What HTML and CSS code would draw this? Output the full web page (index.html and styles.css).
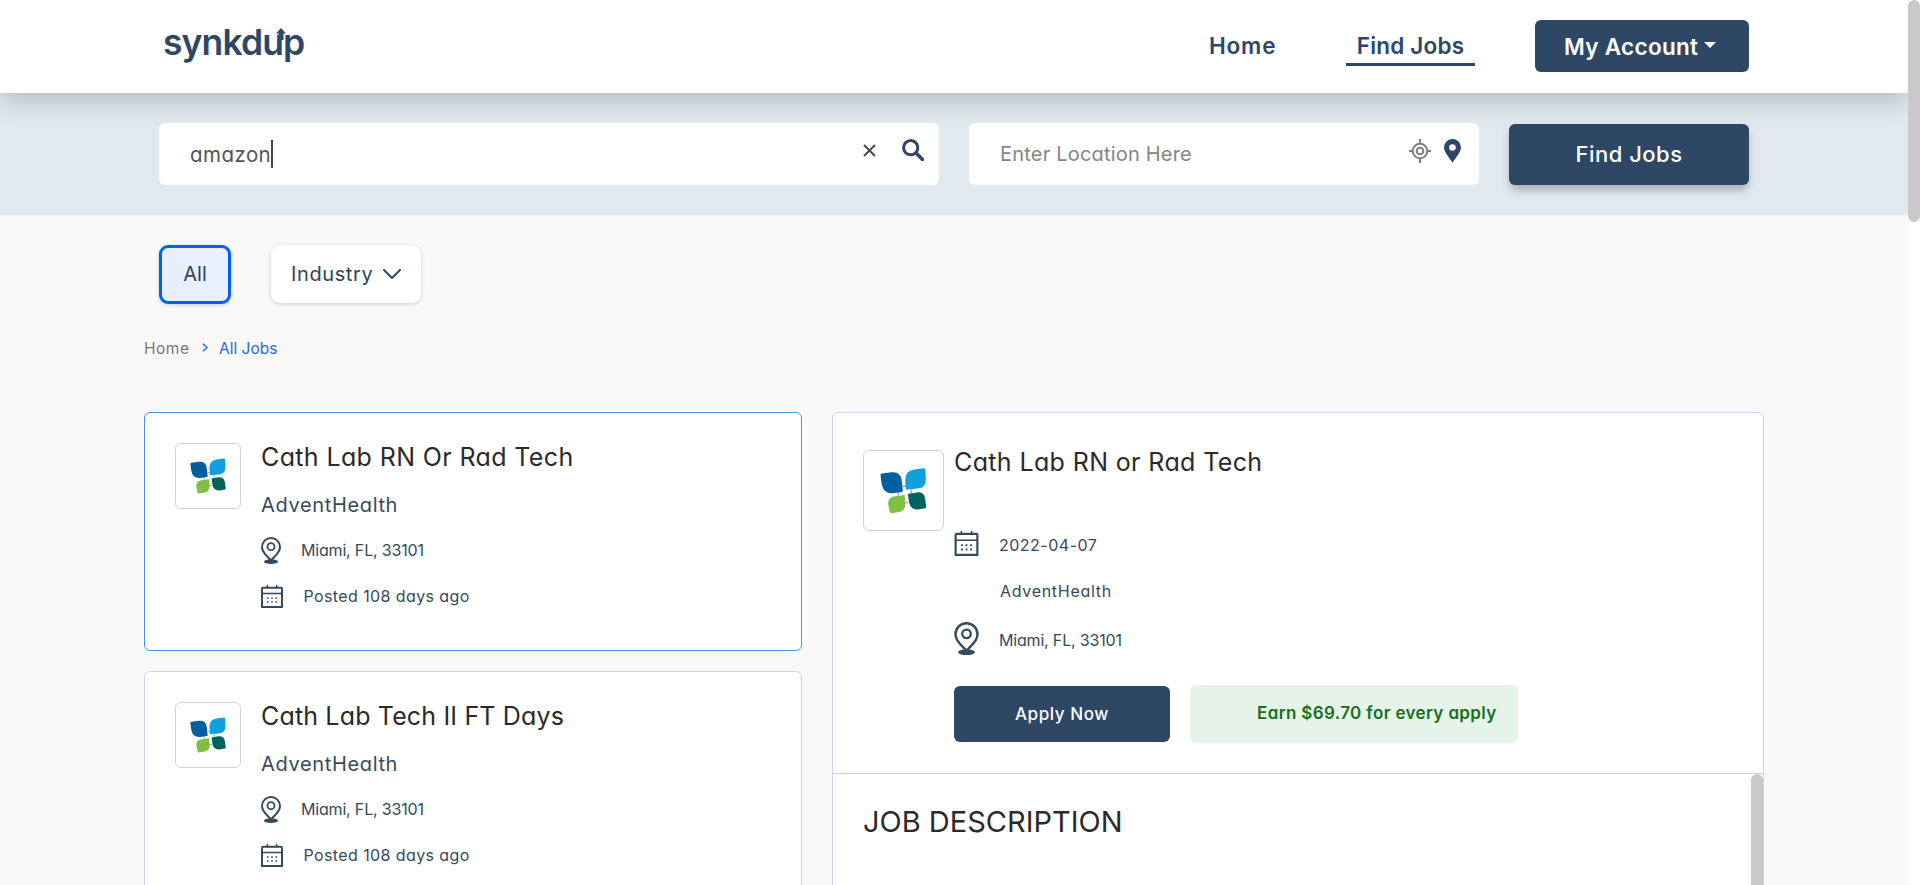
FILE: index.html
```
<!DOCTYPE html>
<html lang="en">
<head>
<meta charset="utf-8">
<title>Synkdup - Find Jobs</title>
<link rel="stylesheet" href="styles.css">
</head>
<body>
<svg class="defs" width="0" height="0">
  <defs>
    <g id="leaves">
      <path d="M192 232V240M223 225V236M203 217H212M207 257H216" stroke="#8b9297" stroke-width="2.5"/>
      <path d="M153 187L176 184Q197 182 200 202L203 228Q203 231 200 231L180 234Q156 236 152 210L149.500 191Q149.500 187 153 187Z" fill="#005f9e"/>
      <path d="M210 226L208.500 204Q208 180 230 177L253 174Q257 174 257 178L258 200Q259 221 238 223Z" fill="#119fdd"/>
      <path d="M207 238L209 258Q210 276 194 279L176 282Q172 282 171.500 278L168 261Q166 243 184 241Z" fill="#80bf41"/>
      <path d="M215 236L236 232Q253 230 256 246L259 267Q259 270 256 270L240 273Q222 274 218 257Z" fill="#00625e"/>
    </g>
    <symbol id="pin" viewBox="0 0 60 81">
      <ellipse cx="30" cy="74" rx="21" ry="7" fill="#354a5a"/>
      <path d="M30 71C24 61 3 50 3 30A27 27 0 0 1 57 30C57 50 36 61 30 71Z" fill="#fff" stroke="#354a5a" stroke-width="6"/>
      <circle cx="30" cy="29" r="10.500" fill="none" stroke="#354a5a" stroke-width="5.500"/>
    </symbol>
    <symbol id="calendar" viewBox="0 0 66 69">
      <path d="M3 66V11Q3 8 6 8H60Q63 8 63 11V66Z" fill="none" stroke="#354a5a" stroke-width="6"/>
      <path d="M3 25.500H63M19 0V10M47 0V10" fill="none" stroke="#354a5a" stroke-width="4.500"/>
      <path d="M18 39H48M18 51H48" fill="none" stroke="#354a5a" stroke-width="5" stroke-dasharray="5 7.500"/>
    </symbol>
  </defs>
</svg>

<div class="page">
  <div class="content">
    <header class="header">
      <div class="brand">synkdup
        <svg class="brand-arrow" viewBox="0 0 10 12"><path d="M5 0L10 5.500H7.500V12H2.500V5.500H0Z" fill="#2e4765"/></svg>
      </div>
      <nav class="nav">
        <a class="nav-link nav-home">Home</a>
        <a class="nav-link nav-jobs">Find Jobs</a>
        <a class="account"><span>My Account</span><i class="caret"></i></a>
      </nav>
    </header>

    <section class="search">
      <div class="field field-query">
        <span class="query">amazon</span><i class="cursor"></i>
        <svg class="clear" viewBox="0 0 13 13"><path d="M1 1L12 12M12 1L1 12" stroke="#4a4a4a" stroke-width="2"/></svg>
        <svg class="magnify" viewBox="0 0 22 22"><circle cx="8.700" cy="8.700" r="7.100" fill="none" stroke="#2e4765" stroke-width="3"/><path d="M14 14L20.500 20.500" stroke="#2e4765" stroke-width="3.500" stroke-linecap="round"/></svg>
      </div>
      <div class="field field-location">
        <span class="placeholder">Enter Location Here</span>
        <svg class="target" viewBox="0 0 22 24"><g fill="none" stroke="#7d7d7d" stroke-width="2"><circle cx="11" cy="12" r="7.300"/><circle cx="11" cy="12" r="3.300"/><path d="M11 0V5M11 19V24M0 12H4M18 12H22"/></g></svg>
        <svg class="marker" viewBox="0 0 17 24"><path fill-rule="evenodd" d="M8.500 0A8.500 8.500 0 0 1 17 8.500C17 13.500 11 19 8.500 24C6 19 0 13.500 0 8.500A8.500 8.500 0 0 1 8.500 0ZM8.500 5.200A3.300 3.300 0 1 0 8.500 11.800A3.300 3.300 0 1 0 8.500 5.200Z" fill="#2e4765"/></svg>
      </div>
      <button class="find">Find Jobs</button>
    </section>

    <div class="filters">
      <span class="chip chip-all">All</span>
      <span class="chip chip-industry"><span>Industry</span><svg class="chevron" viewBox="0 0 18 11"><path d="M1 1L9 9L17 1" fill="none" stroke="#2e4765" stroke-width="2" stroke-linecap="round" stroke-linejoin="round"/></svg></span>
    </div>

    <div class="crumbs">
      <span class="crumb-home">Home</span>
      <svg class="crumb-sep" viewBox="0 0 6 9"><path d="M1 .7L5 4.500L1 8.300" fill="none" stroke="#2a68e0" stroke-width="1.400"/></svg>
      <span class="crumb-all">All Jobs</span>
    </div>

    <main class="columns">
      <div class="list">
        <article class="card card-active">
          <div class="logo"><svg viewBox="105 129 198 198"><use href="#leaves"/></svg></div>
          <div class="info">
            <h2 class="title title-rn">Cath Lab RN Or Rad Tech</h2>
            <p class="company">AdventHealth</p>
            <div class="meta meta-place"><svg class="pin"><use href="#pin"/></svg><span class="place">Miami, FL, 33101</span></div>
            <div class="meta meta-date"><svg class="cal"><use href="#calendar"/></svg><span class="posted">Posted 108 days ago</span></div>
          </div>
        </article>
        <article class="card">
          <div class="logo"><svg viewBox="105 129 198 198"><use href="#leaves"/></svg></div>
          <div class="info">
            <h2 class="title title-tech">Cath Lab Tech II FT Days</h2>
            <p class="company">AdventHealth</p>
            <div class="meta meta-place"><svg class="pin"><use href="#pin"/></svg><span class="place">Miami, FL, 33101</span></div>
            <div class="meta meta-date"><svg class="cal"><use href="#calendar"/></svg><span class="posted">Posted 108 days ago</span></div>
          </div>
        </article>
      </div>

      <section class="detail">
        <div class="summary">
          <div class="logo logo-large"><svg viewBox="110 133 189 189"><use href="#leaves"/></svg></div>
          <div class="facts">
            <h2 class="title title-detail">Cath Lab RN or Rad Tech</h2>
            <div class="fact fact-date"><svg class="cal-large"><use href="#calendar"/></svg><span class="date">2022-04-07</span></div>
            <div class="fact fact-company"><span class="employer">AdventHealth</span></div>
            <div class="fact fact-place"><svg class="pin-large"><use href="#pin"/></svg><span class="place">Miami, FL, 33101</span></div>
            <div class="actions">
              <button class="apply">Apply Now</button>
              <span class="earn">Earn $69.70 for every apply</span>
            </div>
          </div>
        </div>
        <div class="description">
          <h3 class="heading">JOB DESCRIPTION</h3>
          <div class="inner-bar"></div>
        </div>
      </section>
    </main>
  </div>
  <div class="scrollbar"><div class="thumb"></div></div>
</div>
</body>
</html>
```
FILE: styles.css
```
* { box-sizing: border-box; }
body { margin: 0; font-family: Inter, "Open Sans", sans-serif; font-feature-settings: "cv11"; background: #faf9f8; color: #354a5a; }
h2, h3, p { margin: 0; font-weight: 400; }
svg { display: block; flex: none; }
button { border: 0; padding: 0; font-family: inherit; font-feature-settings: inherit; color: #fff; background: #2e4765; }
span, h2, h3, a { white-space: nowrap; }
.defs { position: absolute; }
.page { display: flex; height: 885px; overflow: hidden; }
.content { width: 1908px; overflow: hidden; }
.scrollbar { width: 12px; background: #fff; }
.thumb { height: 222px; border-radius: 6px; background: #c9c9c9; }

.header { position: relative; z-index: 1; height: 93px; padding: 0 159px; display: flex; justify-content: space-between; background: #fff; box-shadow: 0 8px 24px rgba(0, 0, 0, .2); }
.brand { position: relative; padding: 21px 0 0 4px; font-size: 35.500px; line-height: 44px; font-weight: 600; letter-spacing: -.9px; color: #2e4765; }
.brand-arrow { position: absolute; left: 117px; top: 28px; width: 10px; height: 12px; }
.nav { display: flex; align-items: flex-start; color: #2e4765; font-size: 22.500px; font-weight: 600; }
.nav-home { width: 66px; margin: 32px 71px 0 0; line-height: 28px; letter-spacing: .8px; }
.nav-jobs { width: 129px; height: 34px; margin: 32px 60px 0 0; line-height: 28px; letter-spacing: .2px; text-align: center; border-bottom: 3px solid #2e4765; }
.account { display: flex; width: 214px; height: 52px; margin-top: 20px; padding-left: 29px; align-items: center; border-radius: 6px; background: #2e4765; color: #fff; letter-spacing: .3px; }
.caret { margin: -2px 0 0 6px; border: 6px solid transparent; border-top-color: #fff; border-bottom: 0; }

.search { height: 122px; padding: 30px 159px; display: flex; gap: 30px; background: #e1e9ef; }
.field { height: 62px; display: flex; align-items: center; padding-left: 31px; border-radius: 6px; background: #fff; font-size: 20px; }
.field-query { width: 780px; color: #555; }
.query { font-size: 20.500px; letter-spacing: .45px; }
.field-location { width: 510px; color: #858585; letter-spacing: .2px; }
.cursor { width: 2px; height: 28px; background: #444; }
.clear { width: 13px; height: 13px; margin: -7px 26px 0 auto; }
.magnify { width: 22px; height: 22px; margin: -8px 15px 0 0; }
.target { width: 22px; height: 24px; margin: -6px 13px 0 auto; }
.marker { width: 17px; height: 24px; margin: -6px 18px 0 0; }
.find { width: 240px; height: 61px; margin-top: 1px; padding-bottom: 2px; border-radius: 6px; font-size: 22px; font-weight: 500; letter-spacing: .5px; box-shadow: 0 6px 8px -1px rgba(0, 0, 0, .25); }

.filters { display: flex; gap: 40px; padding: 30px 0 0 159px; height: 89px; }
.chip { display: flex; align-items: center; border-radius: 9px; font-size: 20px; color: #2e4357; box-shadow: 0 1px 4px rgba(0, 0, 0, .18); }
.chip-all { width: 72px; height: 59px; padding-bottom: 2px; justify-content: center; border: 3px solid #0060f2; background: #e8f0fe; }
.chip-industry { width: 150px; height: 58px; padding-left: 20px; background: #fff; letter-spacing: .6px; }
.chevron { width: 18px; height: 11px; margin: 1px 0 0 10px; }

.crumbs { display: flex; align-items: center; height: 24px; margin: 32px 0 0 144px; font-size: 15.500px; color: #777; }
.crumb-home { width: 46px; letter-spacing: .5px; }
.crumb-sep { width: 6px; height: 9px; margin: -2px 11px 0 12px; }
.crumb-all { color: #2a68e0; }

.columns { display: flex; gap: 30px; margin: 52px 0 0 144px; }
.list { display: flex; flex-direction: column; gap: 20px; width: 658px; }
.card { display: flex; gap: 20px; height: 239px; padding: 30px; border: 1px solid #c8d4f2; border-radius: 6px; background: #fff; }
.card-active { border-color: #4a90e8; }
.logo { flex: none; width: 66px; height: 66px; border: 1px solid #d2d2d2; border-radius: 6px; overflow: hidden; }
.logo svg { width: 100%; height: 100%; }
.logo-large { width: 81px; height: 81px; margin-top: 2px; }
.title { font-size: 25px; line-height: 28px; letter-spacing: .37px; color: #2a2a2a; }
.title-tech { letter-spacing: .16px; }
.company { margin-top: 22px; font-size: 20px; line-height: 24px; letter-spacing: .65px; }
.meta { display: flex; align-items: center; font-size: 16px; }
.meta span { padding-bottom: 2px; }
.meta-place { height: 27px; margin-top: 20px; gap: 20px; }
.meta-date { height: 23px; margin-top: 21px; gap: 20.500px; }
.place { letter-spacing: -.18px; }
.posted { letter-spacing: .4px; }
.pin { width: 20px; height: 27px; }
.cal { width: 22px; height: 23px; }

.detail { width: 932px; border: 1px solid #c8d4f2; border-radius: 6px 6px 0 0; background: #fff; }
.summary { display: flex; gap: 10px; height: 361px; padding: 35px 30px 0; border-bottom: 1px solid #c8cfe6; }
.fact { display: flex; align-items: center; gap: 20px; font-size: 16px; }
.fact span { padding-top: 3px; }
.date { letter-spacing: .5px; }
.fact-date { height: 25px; margin-top: 55px; }
.fact-company { height: 24px; margin-top: 23px; padding-left: 46px; letter-spacing: .7px; }
.fact-company span { padding-top: 0; }
.fact-place { height: 33px; margin-top: 19px; }
.cal-large { width: 25px; height: 25px; }
.pin-large { width: 25px; height: 33px; }
.actions { display: flex; align-items: center; gap: 20px; height: 58px; margin-top: 30px; }
.apply { width: 216px; height: 56px; border-radius: 6px; font-size: 17px; font-weight: 500; letter-spacing: .6px; }
.earn { width: 328px; height: 58px; padding-left: 67px; border-radius: 6px; line-height: 57px; font-size: 17px; font-weight: 600; letter-spacing: .37px; color: #167020; background: #e6f3e9; }
.description { display: flex; justify-content: space-between; height: 140px; }
.heading { padding: 29px 0 0 30px; font-size: 29px; line-height: 38px; color: #2a2a2a; }
.inner-bar { width: 12px; height: 140px; border-radius: 6px; background: #c9c9c9; }
```
